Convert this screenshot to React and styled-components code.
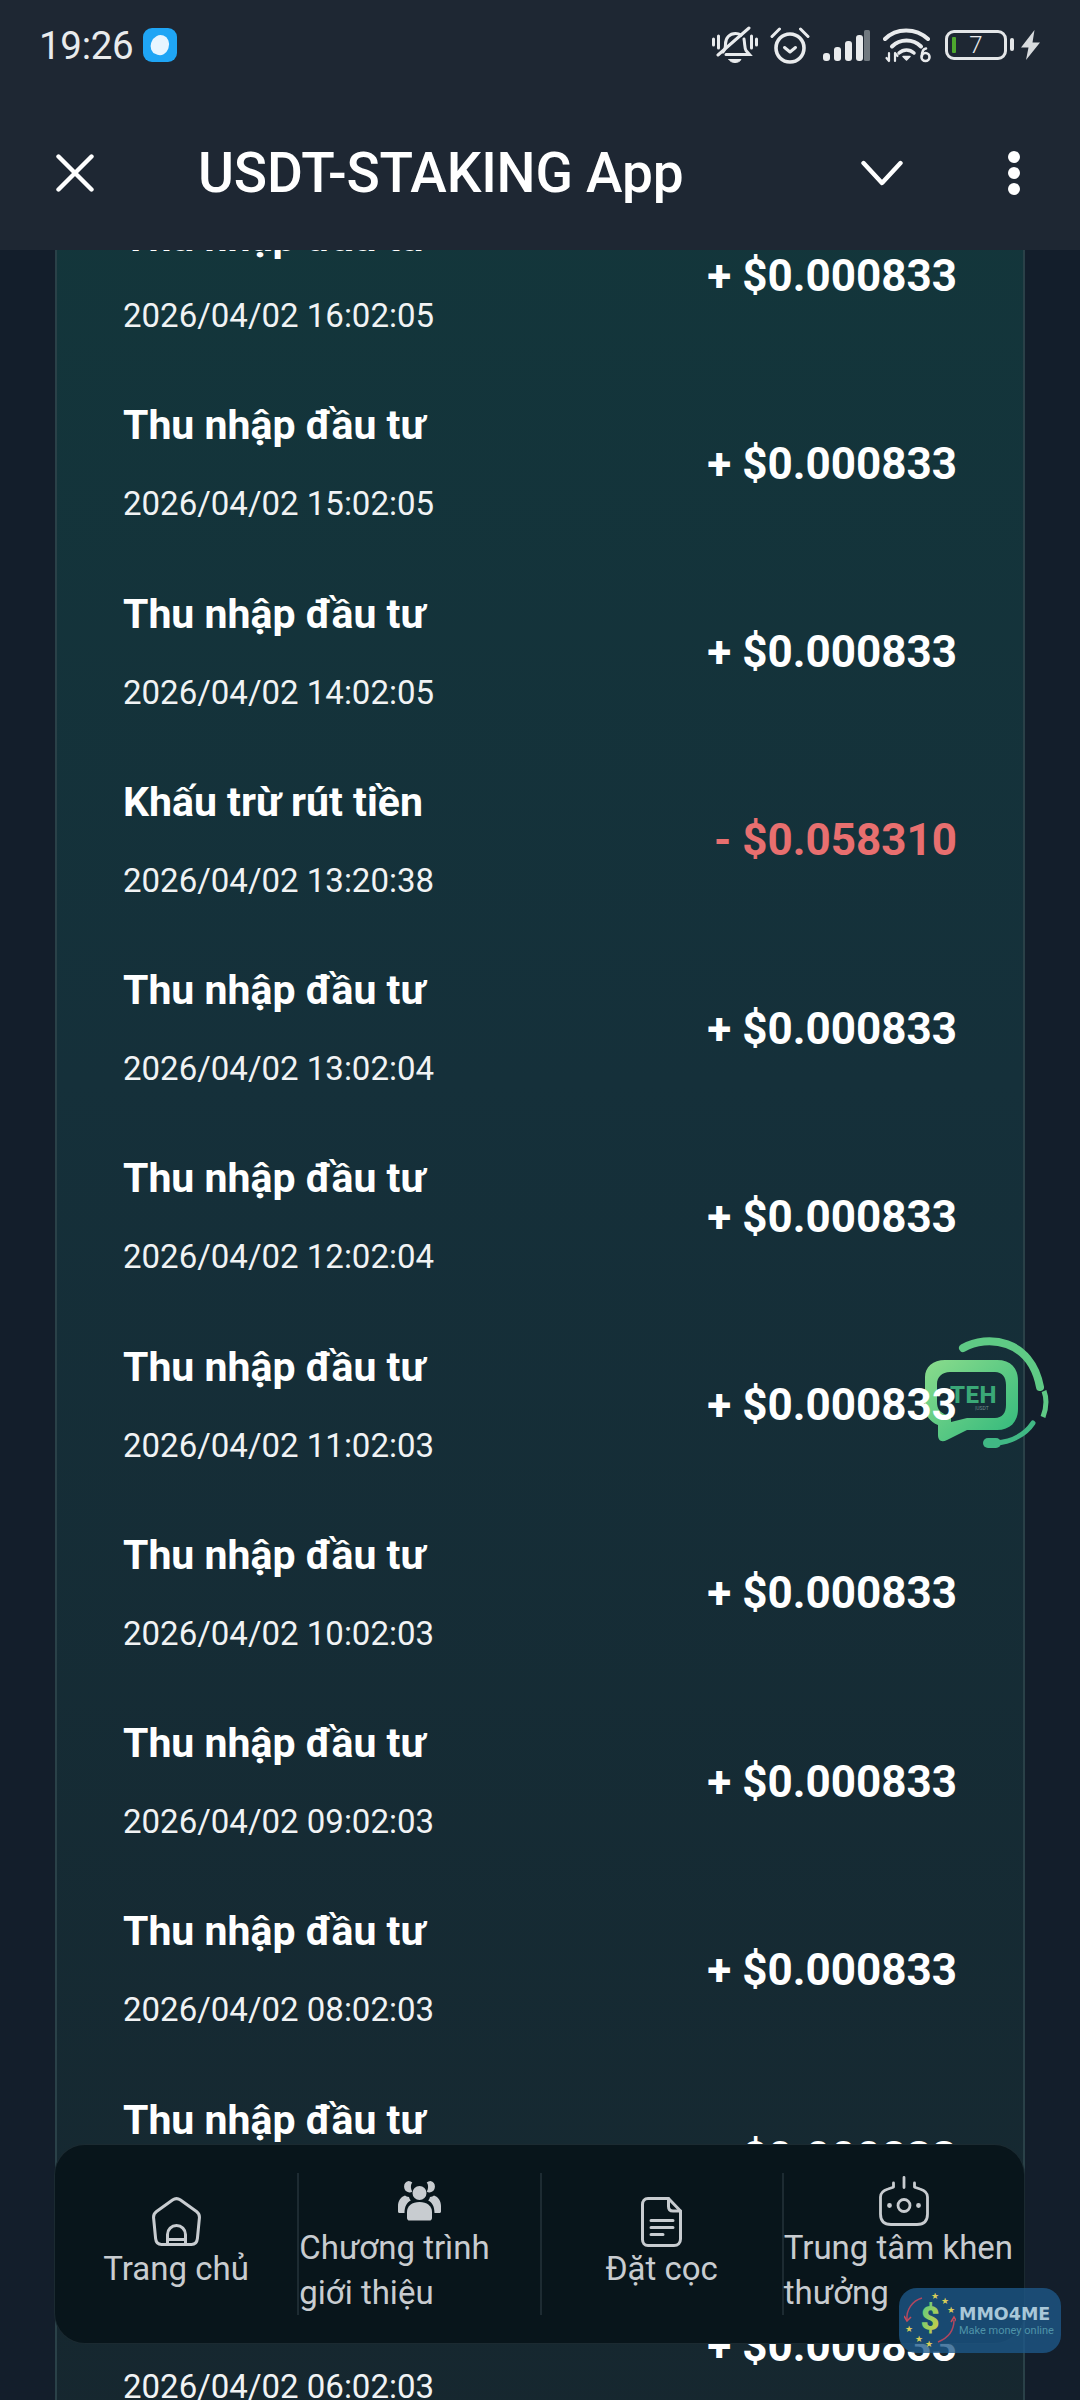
import React from "react";
import styled, { createGlobalStyle } from "styled-components";

const GlobalStyle = createGlobalStyle`
  html, body { margin: 0; padding: 0; background: #131e2b; }
  * { box-sizing: border-box; }
  body { font-family: Roboto, "Noto Sans", sans-serif; }
`;

const rows = [
  { title: "Thu nhập đầu tư", date: "2026/04/02 16:02:05", amount: "+ $0.000833" },
  { title: "Thu nhập đầu tư", date: "2026/04/02 15:02:05", amount: "+ $0.000833" },
  { title: "Thu nhập đầu tư", date: "2026/04/02 14:02:05", amount: "+ $0.000833" },
  { title: "Khấu trừ rút tiền", date: "2026/04/02 13:20:38", amount: "- $0.058310", negative: true },
  { title: "Thu nhập đầu tư", date: "2026/04/02 13:02:04", amount: "+ $0.000833" },
  { title: "Thu nhập đầu tư", date: "2026/04/02 12:02:04", amount: "+ $0.000833" },
  { title: "Thu nhập đầu tư", date: "2026/04/02 11:02:03", amount: "+ $0.000833" },
  { title: "Thu nhập đầu tư", date: "2026/04/02 10:02:03", amount: "+ $0.000833" },
  { title: "Thu nhập đầu tư", date: "2026/04/02 09:02:03", amount: "+ $0.000833" },
  { title: "Thu nhập đầu tư", date: "2026/04/02 08:02:03", amount: "+ $0.000833" },
  { title: "Thu nhập đầu tư", date: "2026/04/02 07:02:03", amount: "+ $0.000833" },
  { title: "Thu nhập đầu tư", date: "2026/04/02 06:02:03", amount: "+ $0.000833" },
];

const HomeIcon = () => (
  <svg width="49" height="49" viewBox="0 0 49 49" fill="none" stroke="#c8ccd0" strokeWidth="3" strokeLinejoin="round">
    <path d="M20.500 3 4.500 14.500C2 16.300 1.300 18 1.600 21l2 20.500c.4 3.800 2.400 5.900 5.900 5.900h30c3.500 0 5.500-2.100 5.900-5.900l2-20.500c.3-3-.4-4.700-2.900-6.500L28.500 3c-2.900-2-5.100-2-8 0Z" />
    <path d="M15.500 47V37.500a9 9 0 0 1 18 0V47" />
    <path d="M15.500 42.500h18" />
  </svg>
);

const PeopleIcon = () => (
  <svg width="43" height="40" viewBox="0 0 43 40" fill="#c8ccd0">
    <circle cx="21.500" cy="12" r="7" />
    <path d="M9 37v-6c0-6 5-10 12.500-10S34 25 34 31v6c0 1.500-1 2.600-2.500 2.600h-20C10 39.600 9 38.500 9 37Z" />
    <path d="M10.500 0a5.500 5.500 0 0 1 3.800 1.500c-1.300 1.500-1.500 3.600-1.300 5.600.2 1.500.6 2.600 1.300 3.400-.8.700-1.800 1-3 .9A5.800 5.800 0 0 1 10.500 0Z" />
    <path d="M32.500 0a5.500 5.500 0 0 0-3.800 1.500c1.300 1.500 1.500 3.600 1.300 5.600-.2 1.500-.6 2.600-1.300 3.400.8.700 1.800 1 3 .9A5.800 5.800 0 0 0 32.500 0Z" />
    <path d="M7 14.500c1 .7 2.200 1.200 4 1.400.3 1.400 1 2.600 1.800 3.500C9 21.500 6.500 25 6.500 32H1.500C.6 32 0 31.300 0 30.500V25c0-5 2.500-9 7-10.500Z" />
    <path d="M36 14.500c-1 .7-2.200 1.200-4 1.400-.3 1.400-1 2.600-1.800 3.500 3.800 2.100 6.300 5.600 6.300 12.600h5c.9 0 1.500-.7 1.500-1.500V25c0-5-2.500-9-7-10.500Z" />
  </svg>
);

const DocIcon = () => (
  <svg width="41" height="50" viewBox="0 0 41 50" fill="none" stroke="#c8ccd0" strokeWidth="3" strokeLinecap="round" strokeLinejoin="round">
    <path d="M7 1.500h20.500L39.500 14v28c0 4-2.500 6.500-6.500 6.500H7c-3.500 0-5.500-2.500-5.500-6V7.500c0-3.500 2-6 5.500-6Z" />
    <path d="M27.500 1.500v8c0 3 1.800 4.500 4.500 4.500h7.500" />
    <path d="M10 23.500h22M10 30.500h22M10 37.500h12" />
  </svg>
);

const RewardIcon = () => (
  <svg width="50" height="50" viewBox="0 0 50 50" fill="none" stroke="#c8ccd0" strokeWidth="2.800" strokeLinecap="round">
    <path d="M13.500 11.500 9 13c-4 1.200-7.500 3-7.500 8v17c0 7 4 10.500 10.500 10.500h26c6.500 0 10.500-3.500 10.500-10.500V21c0-5-3.500-6.800-7.500-8l-4.500-1.500" />
    <path d="M25 1.500v10M14.500 7v4M35.500 7v4" />
    <circle cx="25" cy="29.500" r="6" />
    <circle cx="10.500" cy="29.500" r="1" fill="#c8ccd0" />
    <circle cx="39.500" cy="29.500" r="1" fill="#c8ccd0" />
  </svg>
);

const navItems = [
  { label: "Trang chủ", icon: <HomeIcon /> },
  { label: "Chương trình giới thiệu", icon: <PeopleIcon />, wrap: true },
  { label: "Đặt cọc", icon: <DocIcon /> },
  { label: "Trung tâm khen thưởng", icon: <RewardIcon />, wrap: true },
];

const BellOffIcon = () => (
  <svg width="46" height="38" viewBox="0 0 46 38" fill="none" stroke="#e9ebed" strokeWidth="3" strokeLinecap="round">
    <path d="M1.500 13v6M6.500 10v12M39.500 10v12M44.500 13v6" />
    <path d="M11 26c2-2 2.500-4 2.500-8 0-6 4-10.500 10-10.500 2 0 4 .6 5.500 1.600" />
    <path d="M32 13c1 6 .5 9 2 11.500l3.500 4H14" />
    <path d="M6 29 37 2" />
    <path d="M17 33.500h12c-1 2-3.500 3-6 3s-5-1-6-3Z" fill="#e9ebed" strokeWidth="1" />
  </svg>
);

const AlarmIcon = () => (
  <svg width="40" height="37" viewBox="0 0 40 37" fill="none" stroke="#e9ebed" strokeLinecap="round" strokeLinejoin="round">
    <circle cx="20" cy="21" r="14" strokeWidth="3.600" />
    <path d="M14.500 20.500 20 25l5.500-4.500" strokeWidth="3" />
    <path d="M2 9.500 9.500 2M38 9.500 30.500 2" strokeWidth="3" />
  </svg>
);

const SignalIcon = () => (
  <svg width="48" height="31" viewBox="0 0 48 31" fill="#e9ebed">
    <rect x="0" y="23" width="7" height="8" rx="3" />
    <rect x="11" y="17" width="7" height="14" rx="3" />
    <rect x="22" y="11" width="7" height="20" rx="3" />
    <rect x="33" y="5" width="7" height="26" rx="3" />
    <rect x="41" y="0" width="6" height="31" rx="1.500" fill="#70787f" />
  </svg>
);

const WifiIcon = () => (
  <svg width="48" height="36" viewBox="0 0 48 36" fill="none" stroke="#e9ebed" strokeLinecap="round">
    <path d="M2 12C13 .5 33 .5 45 12" strokeWidth="4" />
    <path d="M9 19.500c8-8 21-8 29 0" strokeWidth="4" />
    <path d="M16 26c4.500-4 10.500-4 15 0" strokeWidth="3.500" />
    <path d="M20 29.500h7l-3.500 3.500Z" fill="#e9ebed" strokeWidth="1.500" strokeLinejoin="round" />
    <path d="M6 26v8M3.500 31 6 34M12 34v-8M12 26l2.500 3" strokeWidth="2.200" />
    <circle cx="42.500" cy="30" r="4" strokeWidth="2.600" />
    <path d="M39 29c0-4 1-7 4-7.500" strokeWidth="2.600" />
  </svg>
);

const BoltIcon = () => (
  <svg width="19" height="30" viewBox="0 0 19 30" fill="#d8dbde">
    <path d="M13.500 0 0 17.500h7.500L5 30l14-17.500h-7.500Z" />
  </svg>
);

const CloseIcon = () => (
  <svg width="38" height="38" viewBox="0 0 38 38" stroke="#fff" strokeWidth="4.400" strokeLinecap="round">
    <path d="M2.500 2.500 35.500 35.500M35.500 2.500 2.500 35.500" />
  </svg>
);

const ChevronIcon = () => (
  <svg width="42" height="26" viewBox="0 0 42 26" fill="none" stroke="#fff" strokeWidth="4.400" strokeLinecap="round" strokeLinejoin="round">
    <path d="M2.500 3 21 23 39.500 3" />
  </svg>
);

const TehBubble = () => (
  <svg width="124" height="112" viewBox="0 0 124 112" fill="none">
    <defs>
      <linearGradient id="tehGreen" x1="0" y1="0" x2="1" y2="1">
        <stop offset="0" stopColor="#8bdc8c" />
        <stop offset="1" stopColor="#2fb87c" />
      </linearGradient>
    </defs>
    <path d="M38 11C62 -3 106 2 115 50" stroke="#5fca85" strokeWidth="8" strokeLinecap="round" />
    <path d="M119 54c3 8 2 18-1 26" stroke="#5fca85" strokeWidth="5" />
    <path d="M108 86c-8 12-22 19-38 20" stroke="#40b884" strokeWidth="5" strokeLinecap="round" />
    <rect x="58" y="101" width="18" height="10" rx="5" fill="#40b884" />
    <path
      fillRule="evenodd"
      fill="url(#tehGreen)"
      d="M20 23H72C86 23 93 31 93 44V72C93 85 85 93 72 93H42L22 103C16 106 13 103 13 98V88C5 85 0 78 0 70V40C0 30 8 23 20 23ZM25 35C17 35 12 40 12 47V65C12 72 15 76 22 78L26 79V85L42 81H70C77 81 81 76 81 68V48C81 40 77 35 70 35Z"
    />
  </svg>
);

const CoinMark = () => (
  <svg width="52" height="56" viewBox="0 0 52 56" fill="none">
    <defs>
      <linearGradient id="coinGreen" x1="0" y1="0" x2="1" y2="1">
        <stop offset="0" stopColor="#4dc98a" />
        <stop offset="1" stopColor="#e0cf3a" />
      </linearGradient>
    </defs>
    <path d="M18 5C8 8 2 17 3 27" stroke="#b2475f" strokeWidth="1.500" />
    <path d="M0 23 3 28l4-4" stroke="#c84a5a" strokeWidth="1.500" />
    <path d="M34 49c10-4 16-12 16-22" stroke="#b2475f" strokeWidth="1.500" />
    <path d="M47 29l3-5 3 5" stroke="#c84a5a" strokeWidth="1.500" />
    <text x="26" y="37" textAnchor="middle" fontFamily="Roboto, sans-serif" fontWeight="900" fontSize="33" fill="url(#coinGreen)">$</text>
    {[[31, 3], [41, 8], [47, 17], [5, 36], [15, 46], [25, 51]].map(([x, y]) => (
      <text key={x} x={x} y={y + 3} textAnchor="middle" fontSize="9" fill="#d8cd5a">★</text>
    ))}
  </svg>
);

const Screen = styled.div`
  position: relative;
  width: 1080px;
  height: 2400px;
  overflow: hidden;
  background: #131e2b;
  color: #fff;
`;

const Header = styled.header`
  position: relative;
  z-index: 3;
  height: 250px;
  background: #1e2733;
`;

const StatusBar = styled.div`
  display: flex;
  align-items: center;
  justify-content: space-between;
  height: 90px;
  padding: 0 40px 0 39px;
`;

const StatusLeft = styled.div`
  display: flex;
  align-items: center;
  gap: 10px;
`;

const Clock = styled.span`
  font-size: 38.500px;
  color: #e9ebed;
  letter-spacing: -0.3px;
`;

const AppBadge = styled.span`
  display: block;
  position: relative;
  width: 34px;
  height: 34px;
  border-radius: 9px;
  background: #1fa5f5;
  &::after {
    content: "";
    position: absolute;
    left: 8px;
    top: 7px;
    width: 18px;
    height: 20px;
    border-radius: 50% 50% 45% 45%;
    background: #e8f5ff;
    transform: rotate(20deg);
  }
`;

const StatusRight = styled.div`
  display: flex;
  align-items: center;
`;

const StatusSlot = styled.span`
  display: flex;
  margin-left: ${(p) => p.$gap}px;
`;

const Battery = styled.span`
  position: relative;
  display: flex;
  align-items: center;
  justify-content: center;
  width: 62px;
  height: 30px;
  margin-left: 14px;
  border: 3px solid #e4e6e8;
  border-radius: 9px;
  font-size: 24px;
  font-weight: 300;
  color: #e9ebed;
  &::before {
    content: "";
    position: absolute;
    left: 4px;
    top: 4px;
    width: 4px;
    height: 16px;
    border-radius: 1px;
    background: #4ea72e;
  }
  &::after {
    content: "";
    position: absolute;
    right: -10px;
    top: 5px;
    width: 4px;
    height: 13px;
    border-radius: 2px;
    background: #e4e6e8;
  }
`;

const TitleBar = styled.div`
  display: flex;
  align-items: center;
  height: 160px;
  padding: 6px 60px 0 56px;
`;

const Title = styled.h1`
  flex: 1;
  margin: 0 0 0 104px;
  font-size: 55px;
  font-weight: 500;
  letter-spacing: -0.2px;
`;

const MenuDots = styled.span`
  display: flex;
  flex-direction: column;
  gap: 4px;
  margin-left: 105px;
  span {
    width: 12px;
    height: 12px;
    border-radius: 50%;
    background: #fff;
  }
`;

const Viewport = styled.main`
  height: 2150px;
  padding: 0 55px;
  overflow: hidden;
`;

const Card = styled.section`
  margin-top: -70px;
  border-left: 2px solid #2a4148;
  border-right: 2px solid #2a4148;
  background: linear-gradient(180deg, #13363b 0%, #15303a 40%, #16272f 100%);
`;

const Row = styled.div`
  display: flex;
  align-items: center;
  justify-content: space-between;
  height: 188.250px;
  padding: 0 66px 0 66px;
`;

const RowText = styled.div`
  display: flex;
  flex-direction: column;
  gap: 37px;
  padding-top: 1px;
`;

const RowTitle = styled.div`
  font-size: 41px;
  line-height: 46px;
  font-weight: 700;
`;

const RowDate = styled.div`
  font-size: 33px;
  line-height: 38px;
  color: #f1f3f4;
`;

const Amount = styled.div`
  position: relative;
  z-index: 2;
  padding-top: 3px;
  font-size: 44px;
  font-weight: 700;
  color: ${(p) => (p.$negative ? "#e86f6f" : "#fff")};
`;

const FloatingChat = styled.div`
  position: absolute;
  z-index: 1;
  left: 925px;
  top: 1337px;
  width: 124px;
  height: 112px;
`;

const FloatingLabel = styled.span`
  position: absolute;
  left: 25px;
  top: 44px;
  font-size: 24px;
  line-height: 28px;
  font-weight: 800;
  color: #3aa877;
  letter-spacing: 0.5px;
`;

const FloatingTag = styled.span`
  position: absolute;
  left: 50px;
  top: 68px;
  font-size: 5px;
  line-height: 6px;
  color: #6f8a8a;
`;

const BottomNav = styled.nav`
  position: absolute;
  z-index: 4;
  left: 55px;
  top: 2145px;
  width: 969px;
  height: 198px;
  display: grid;
  grid-template-columns: repeat(4, 1fr);
  align-items: center;
  border-radius: 30px;
  background: #08151b;
  box-shadow: 0 0 0 1px #1b2a31;
`;

const NavItem = styled.div`
  display: flex;
  flex-direction: column;
  align-items: center;
  justify-content: ${(p) => (p.$wrap ? "flex-end" : "center")};
  height: 142px;
  border-left: ${(p) => (p.$first ? "none" : "2px solid #1d2b32")};
`;

const NavIcon = styled.span`
  display: flex;
  flex: none;
  align-items: center;
  justify-content: center;
  height: 50px;
`;

const NavLabel = styled.span`
  width: ${(p) => (p.$wrap ? "100%" : "auto")};
  font-size: 33px;
  line-height: 44.500px;
  color: #c8ccd0;
`;

const Watermark = styled.div`
  position: absolute;
  z-index: 5;
  left: 899px;
  top: 2288px;
  width: 162px;
  height: 65px;
  display: flex;
  align-items: center;
  gap: 3px;
  padding-left: 5px;
  border-radius: 18px;
  background: rgba(29, 89, 137, 0.78);
`;

const WatermarkText = styled.div`
  display: flex;
  flex-direction: column;
  color: #a9c7d8;
`;

const WatermarkName = styled.span`
  font-family: "DejaVu Sans", Roboto, sans-serif;
  font-size: 17.500px;
  line-height: 20px;
  font-weight: 700;
`;

const WatermarkTag = styled.span`
  font-size: 11px;
  line-height: 13px;
  white-space: nowrap;
  color: #4e93a8;
`;

export default function App() {
  return (
    <Screen>
      <GlobalStyle />
      <Header>
        <StatusBar>
          <StatusLeft>
            <Clock>19:26</Clock>
            <AppBadge />
          </StatusLeft>
          <StatusRight>
            <BellOffIcon />
            <StatusSlot $gap={12}><AlarmIcon /></StatusSlot>
            <StatusSlot $gap={13}><SignalIcon /></StatusSlot>
            <StatusSlot $gap={12}><WifiIcon /></StatusSlot>
            <Battery>7</Battery>
            <StatusSlot $gap={14}><BoltIcon /></StatusSlot>
          </StatusRight>
        </StatusBar>
        <TitleBar>
          <CloseIcon />
          <Title>USDT-STAKING App</Title>
          <ChevronIcon />
          <MenuDots><span /><span /><span /></MenuDots>
        </TitleBar>
      </Header>
      <Viewport>
        <Card>
          {rows.map((row) => (
            <Row key={row.date}>
              <RowText>
                <RowTitle>{row.title}</RowTitle>
                <RowDate>{row.date}</RowDate>
              </RowText>
              <Amount $negative={row.negative}>{row.amount}</Amount>
            </Row>
          ))}
        </Card>
      </Viewport>
      <FloatingChat>
        <TehBubble />
        <FloatingLabel>TEH</FloatingLabel>
        <FloatingTag>|USDT</FloatingTag>
      </FloatingChat>
      <BottomNav>
        {navItems.map((item, i) => (
          <NavItem key={item.label} $first={i === 0} $wrap={item.wrap}>
            <NavIcon>{item.icon}</NavIcon>
            <NavLabel $wrap={item.wrap}>{item.label}</NavLabel>
          </NavItem>
        ))}
      </BottomNav>
      <Watermark>
        <CoinMark />
        <WatermarkText>
          <WatermarkName>MMO4ME</WatermarkName>
          <WatermarkTag>Make money online</WatermarkTag>
        </WatermarkText>
      </Watermark>
    </Screen>
  );
}
